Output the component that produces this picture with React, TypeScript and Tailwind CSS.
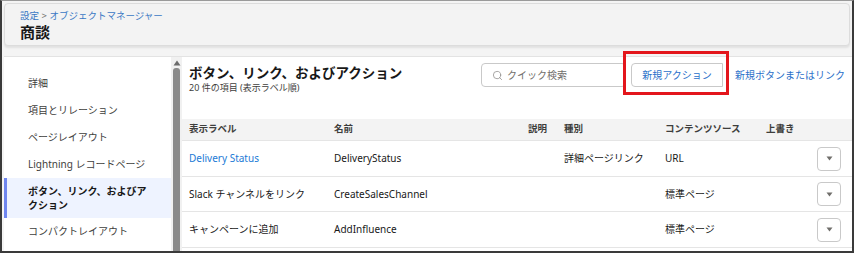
import { Search } from "lucide-react";

// ─── Data ───────────────────────────────────────────────────────────

const navItems = [
  { label: "詳細" },
  { label: "項目とリレーション" },
  { label: "ページレイアウト" },
  { label: "Lightning レコードページ" },
  { label: "ボタン、リンク、およびアクション", active: true },
  { label: "コンパクトレイアウト" },
];

const rows = [
  { label: "Delivery Status", link: true, name: "DeliveryStatus", kind: "詳細ページリンク", source: "URL", h: "h-[36px]" },
  { label: "Slack チャンネルをリンク", name: "CreateSalesChannel", kind: "", source: "標準ページ", h: "h-[35px]" },
  { label: "キャンペーンに追加", name: "AddInfluence", kind: "", source: "標準ページ", h: "h-[36px]" },
];

const cols = "grid grid-cols-[152px_194px_36px_101px_101px_51px_1fr] items-center";

// ─── Sidebar ────────────────────────────────────────────────────────

function Sidebar() {
  return (
    <div className="flex shrink-0">
      <div className="w-[167px] bg-white pt-[13px]">
        {navItems.map((item) =>
          item.active ? (
            <div
              key={item.label}
              className="h-[40px] flex items-center bg-[#eef3ff] border-l-[3px] border-[#6f86f0] pl-[21px] pr-4 text-[10px] leading-[14px] font-bold text-[#181818]"
            >
              ボタン、リンク、およびア
              <br />
              クション
            </div>
          ) : (
            <div key={item.label} className="h-[27px] flex items-center pl-[24px] text-[10px] text-[#3e3e3c]">
              {item.label}
            </div>
          )
        )}
      </div>
      <div className="w-[11px] bg-[#f1f1f1] flex flex-col items-center">
        <svg width="8" height="6" viewBox="0 0 8 6" className="mt-[3px] shrink-0">
          <path d="M4 0.5 L7.5 5.5 L0.5 5.5 Z" fill="#6b6b6b" />
        </svg>
        <div className="mt-[2px] w-[7px] flex-1 rounded-t-[3px] bg-[#8a8a8a]" />
      </div>
    </div>
  );
}

// ─── Table ──────────────────────────────────────────────────────────

function Table() {
  return (
    <div>
      <div className={`${cols} h-[22px] bg-[#f3f3f3] border-b border-[#e5e5e5] text-[9.5px] font-bold text-[#3e3e3c]`}>
        <div className="pl-[7px]">表示ラベル</div>
        <div>名前</div>
        <div>説明</div>
        <div>種別</div>
        <div>コンテンツソース</div>
        <div>上書き</div>
        <div />
      </div>
      {rows.map((r) => (
        <div key={r.name} className={`${cols} ${r.h} border-b border-[#e5e5e5] text-[10px] text-[#181818]`}>
          <div className={r.link ? "pl-[7px] text-[#1b7ad6]" : "pl-[7px]"}>{r.label}</div>
          <div>{r.name}</div>
          <div />
          <div>{r.kind}</div>
          <div>{r.source}</div>
          <div />
          <div>
            <div className="w-[24px] h-[24px] rounded-[4px] border border-[#c9c9c9] bg-white flex items-center justify-center">
              <svg width="7" height="5" viewBox="0 0 7 5">
                <path d="M0.5 0.5 L6.5 0.5 L3.5 4.5 Z" fill="#706e6b" />
              </svg>
            </div>
          </div>
        </div>
      ))}
    </div>
  );
}

// ─── Main ───────────────────────────────────────────────────────────

function Main() {
  return (
    <div className="flex-1 min-w-0 bg-white overflow-hidden">
      <div className="h-[62px] flex">
        <div className="w-[299px] shrink-0 pl-[7px] pt-[7px]">
          <div className="text-[13.5px] leading-[18px] font-bold text-[#181818] whitespace-nowrap">
            ボタン、リンク、およびアクション
          </div>
          <div className="text-[9px] leading-[12px] text-[#3e3e3c] whitespace-nowrap">20 件の項目 (表示ラベル順)</div>
        </div>
        <div className="pt-[6px] flex items-start shrink-0">
          <div className="w-[145px] h-[24px] rounded-[4px] border border-[#c9c9c9] flex items-center pl-[10px] gap-[4px] text-[10px] text-[#706e6b]">
            <Search size={11} strokeWidth={1.6} color="#8a8886" />
            クイック検索
          </div>
          <div className="ml-[5px] w-[92px] h-[24px] rounded-l-[4px] border border-[#c9c9c9] flex items-center justify-center text-[10px] text-[#2a6fc9]">
            新規アクション
          </div>
          <div className="ml-[3px] h-[24px] border-l border-[#c9c9c9] pl-[8px] pr-4 flex items-center text-[10px] text-[#2a6fc9] whitespace-nowrap">
            新規ボタンまたはリンク
          </div>
        </div>
      </div>
      <Table />
    </div>
  );
}

// ─── App ────────────────────────────────────────────────────────────

export default function App() {
  return (
    <div className="relative w-[854px] h-[253px] overflow-hidden bg-[#f4f4f4] border-t border-x-2 border-b-2 border-t-[#9a9a9a] border-x-[#3a3a3a] border-b-[#3a3a3a] font-['Noto_Sans','Noto_Sans_CJK_JP',sans-serif] flex flex-col">
      <div className="ml-[2px] mr-[2px] mt-[2px] h-[43px] shrink-0 rounded-[4px] border border-[#dcdcdc] bg-[#f3f3f3] shadow-[0_2px_2px_rgba(0,0,0,0.08)] pl-[15px] pt-[5px]">
        <div className="text-[9.5px] leading-[13px] text-[#3a78c4]">
          設定 <span className="text-[#706e6b]">&gt;</span> オブジェクトマネージャー
        </div>
        <div className="text-[15px] leading-[20px] font-bold text-[#181818]">商談</div>
      </div>
      <div className="mt-[10px] ml-[2px] flex flex-1 min-h-0 border-t border-[#e3e3e3]">
        <Sidebar />
        <Main />
      </div>
      <div className="absolute left-[621px] top-[50px] w-[106px] h-[44px] border-[3px] border-[#e3161c]" />
    </div>
  );
}
